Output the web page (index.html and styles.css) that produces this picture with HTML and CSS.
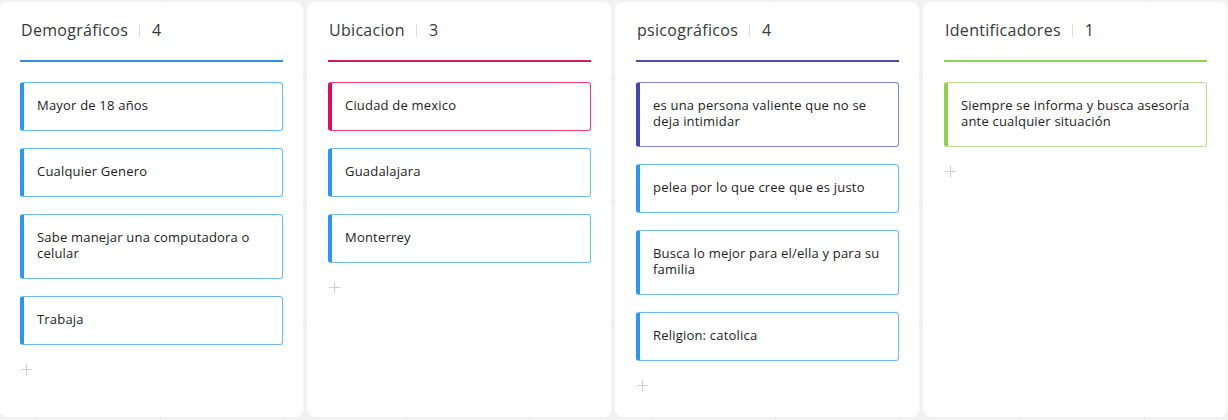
FILE: index.html
```html
<!DOCTYPE html>
<html lang="es">
<head>
<meta charset="utf-8">
<title>Board</title>
<link rel="stylesheet" href="styles.css">
</head>
<body>
<div class="board">
  <section class="col col-blue">
    <header class="col-head"><span class="col-title">Demográficos</span><span class="sep"></span><span class="count">4</span></header>
    <div class="rule"></div>
    <div class="cards">
      <div class="card">Mayor de 18 años</div>
      <div class="card">Cualquier Genero</div>
      <div class="card">Sabe manejar una computadora o celular</div>
      <div class="card">Trabaja</div>
    </div>
    <div class="add"><svg width="11" height="11" viewBox="0 0 11 11"><path d="M5.5 0V11M0 5.5H11" stroke="#cfcfcf" stroke-width="1.2" fill="none"/></svg></div>
  </section>
  <section class="col col-pink">
    <header class="col-head"><span class="col-title">Ubicacion</span><span class="sep"></span><span class="count">3</span></header>
    <div class="rule"></div>
    <div class="cards">
      <div class="card card-pink">Ciudad de mexico</div>
      <div class="card">Guadalajara</div>
      <div class="card">Monterrey</div>
    </div>
    <div class="add"><svg width="11" height="11" viewBox="0 0 11 11"><path d="M5.5 0V11M0 5.5H11" stroke="#cfcfcf" stroke-width="1.2" fill="none"/></svg></div>
  </section>
  <section class="col col-indigo">
    <header class="col-head"><span class="col-title">psicográficos</span><span class="sep"></span><span class="count">4</span></header>
    <div class="rule"></div>
    <div class="cards">
      <div class="card card-indigo">es una persona valiente que no se deja intimidar</div>
      <div class="card">pelea por lo que cree que es justo</div>
      <div class="card">Busca lo mejor para el/ella y para su familia</div>
      <div class="card">Religion: catolica</div>
    </div>
    <div class="add"><svg width="11" height="11" viewBox="0 0 11 11"><path d="M5.5 0V11M0 5.5H11" stroke="#cfcfcf" stroke-width="1.2" fill="none"/></svg></div>
  </section>
  <section class="col col-green">
    <header class="col-head"><span class="col-title">Identificadores</span><span class="sep"></span><span class="count">1</span></header>
    <div class="rule"></div>
    <div class="cards">
      <div class="card card-green">Siempre se informa y busca asesoría ante cualquier situación</div>
    </div>
    <div class="add"><svg width="11" height="11" viewBox="0 0 11 11"><path d="M5.5 0V11M0 5.5H11" stroke="#cfcfcf" stroke-width="1.2" fill="none"/></svg></div>
  </section>
</div>
</body>
</html>
```
FILE: styles.css
```css
html, body {
  margin: 0;
  padding: 0;
}
body {
  width: 1228px;
  height: 420px;
  overflow: hidden;
  background-color: #f2f2f2;
  background-image:
    linear-gradient(to right, #ebebeb 1px, transparent 1px),
    linear-gradient(to bottom, #ebebeb 1px, transparent 1px);
  background-size: 123px 123px;
  background-position: 37px 78px;
  font-family: "Open Sans", "Noto Sans", "Liberation Sans", sans-serif;
  color: #222;
}
.board {
  display: flex;
  gap: 4px;
  padding-top: 2px;
  margin-left: -1px;
}
.col {
  width: 304px;
  height: 415px;
  background: #fff;
  border-radius: 8px;
  box-sizing: border-box;
  padding: 0 20px 0 21px;
  flex: none;
}
.col-head {
  display: flex;
  align-items: center;
  height: 56px;
  padding: 0 0 2px 1px;
  font-size: 16px;
  color: #383838;
}
.col-title {
  letter-spacing: 0.3px;
}
.sep {
  width: 1px;
  height: 13px;
  background: #dcdcdc;
  margin: 0 12px 0 11px;
}
.rule {
  height: 2px;
  background: #2e8fe3;
  margin-bottom: 20px;
}
.col-pink .rule { background: #d6186a; }
.col-indigo .rule { background: #4a4ca8; }
.col-green .rule { background: #90d256; }

.cards {
  display: flex;
  flex-direction: column;
  gap: 17px;
}
.card {
  border: 1px solid #6cb8f4;
  border-left: 4px solid #2b97f1;
  border-radius: 3px;
  padding: 14px 5px 17px 13px;
  font-size: 13px;
  line-height: 16px;
  color: #222;
  background: #fff;
  letter-spacing: 0.2px;
}
.card-pink {
  border-color: #ec3b81;
  border-left-color: #dc0a66;
}
.card-indigo {
  border-color: #8286cf;
  border-left-color: #4147ab;
}
.card-green {
  border-color: #b5e18b;
  border-left-color: #8ed24e;
}
.add {
  margin-top: 19px;
  padding-left: 1px;
  height: 11px;
  line-height: 0;
}
```
